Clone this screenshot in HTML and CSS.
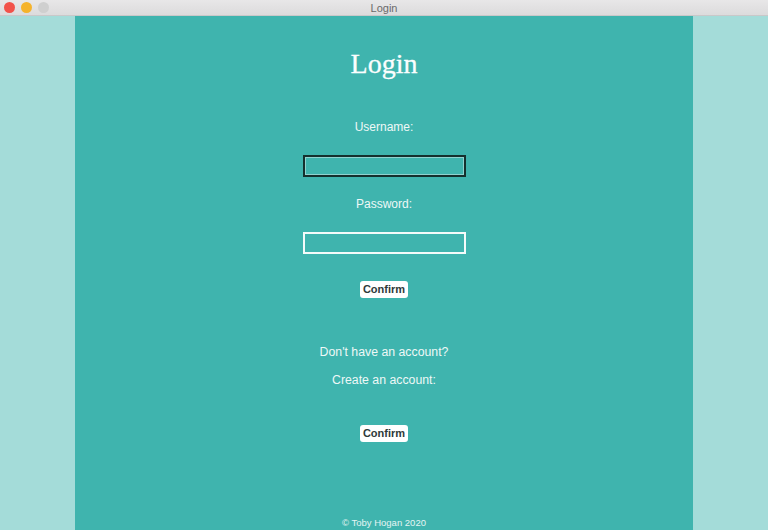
FILE: index.html
```html
<!DOCTYPE html>
<html>
<head>
<meta charset="utf-8">
<link rel="stylesheet" href="styles.css">
</head>
<body>
<div class="titlebar">
  <div class="lights">
    <span class="light red"></span>
    <span class="light yellow"></span>
    <span class="light grey"></span>
  </div>
  <div class="wintitle">Login</div>
</div>
<div class="stage">
  <main class="panel">
    <h1 class="title">Login</h1>
    <label class="label l-user">Username:</label>
    <input class="field focused" type="text">
    <label class="label l-pass">Password:</label>
    <input class="field" type="password">
    <button class="btn b-first">Confirm</button>
    <p class="text t-noacc">Don't have an account?</p>
    <p class="text t-create">Create an account:</p>
    <button class="btn b-second">Confirm</button>
    <div class="spacer"></div>
    <footer class="footer">© Toby Hogan 2020</footer>
  </main>
</div>
</body>
</html>
```
FILE: styles.css
```css
html, body {
  margin: 0;
  padding: 0;
  width: 768px;
  height: 530px;
  overflow: hidden;
  font-family: "Liberation Sans", Arial, sans-serif;
}
body {
  display: flex;
  flex-direction: column;
  background: #a4dcd9;
}
.titlebar {
  height: 16px;
  background: linear-gradient(#e8e7e8, #dcdbdc);
  border-bottom: 1px solid #c9c8c9;
  box-sizing: border-box;
  display: flex;
  align-items: center;
  justify-content: center;
  flex: none;
  position: relative;
}
.lights {
  position: absolute;
  left: 4px;
  top: 2px;
  display: flex;
  gap: 6px;
}
.light {
  width: 11px;
  height: 11px;
  border-radius: 50%;
  display: block;
}
.red { background: #f2524a; }
.yellow { background: #f5b32c; }
.grey { background: #cfcfcf; }
.wintitle {
  font-size: 11px;
  color: #6a6a6a;
  line-height: 16px;
}
.stage {
  flex: 1;
  display: flex;
  justify-content: center;
}
.panel {
  width: 618px;
  background: #3fb4ae;
  display: flex;
  flex-direction: column;
  align-items: center;
  color: #eef8f7;
}
.title {
  font-family: "Liberation Serif", "Times New Roman", serif;
  font-weight: normal;
  font-size: 28px;
  line-height: 30px;
  margin: 33px 0 0;
  color: #fbfefe;
  -webkit-text-stroke: 0.3px #fbfefe;
}
.label {
  font-size: 12px;
  line-height: 14px;
  display: block;
}
.l-user { margin-top: 41px; }
.l-pass { margin-top: 20px; }
.field {
  width: 163px;
  height: 22px;
  box-sizing: border-box;
  border: 2px solid #f4fbfa;
  background: transparent;
  margin: 0;
  padding: 0;
  outline: none;
}
.l-user + .field { margin-top: 21px; }
.l-pass + .field { margin-top: 21px; }
.field.focused {
  border-color: #15302e;
  box-shadow: inset 0 0 0 1px #8fd3cf;
}
.btn {
  font-family: "Liberation Sans", Arial, sans-serif;
  font-size: 11px;
  font-weight: bold;
  color: #2e3a3a;
  background: #ffffff;
  border: none;
  border-radius: 3px;
  height: 17px;
  padding: 0 3px;
  line-height: 17px;
}
.b-first { margin-top: 27px; }
.text {
  font-size: 12.3px;
  line-height: 14px;
  margin: 0;
}
.t-noacc { margin-top: 47px; }
.t-create { margin-top: 14px; }
.b-second { margin-top: 38px; }
.spacer { flex: 1; }
.footer {
  font-size: 9.5px;
  line-height: 11px;
  margin-bottom: 2px;
  color: #e4f4f3;
}
```
